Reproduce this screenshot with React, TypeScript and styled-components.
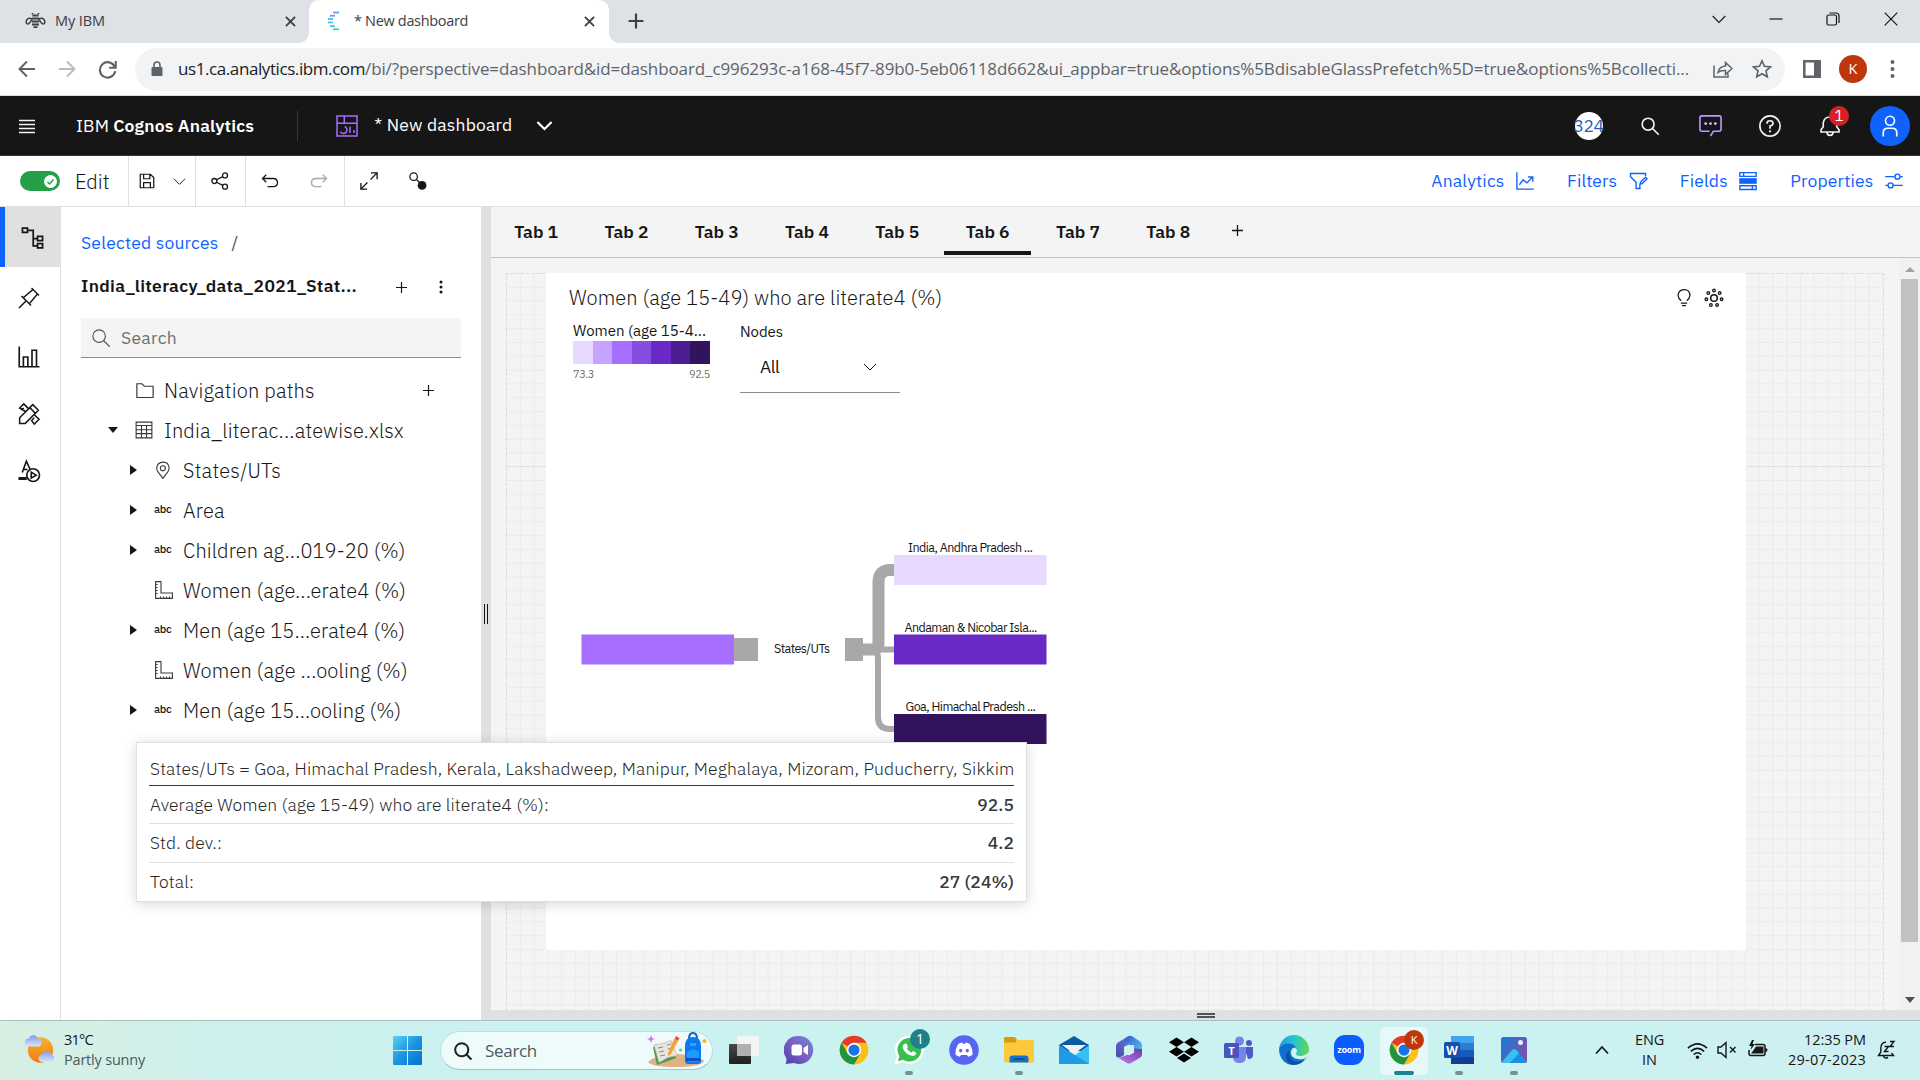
import React from "react";
import styled, { createGlobalStyle } from "styled-components";

const plex = `"IBM Plex Sans", Roboto, "Liberation Sans", sans-serif`;
const segoe = `"Segoe UI", "Open Sans", "Noto Sans", sans-serif`;

const GlobalStyle = createGlobalStyle`
  * { box-sizing: border-box; }
  html, body { margin: 0; padding: 0; }
  body { width: 1920px; height: 1080px; overflow: hidden; background: #fff; font-family: ${plex}; color: #161616; }
  svg { display: block; flex: none; }
`;

/* ---------- shared parts ---------- */

const Page = styled.div`
  position: relative;
  width: 1920px;
  height: 1080px;
  display: flex;
  flex-direction: column;
  overflow: hidden;
`;

const Text = styled.span<{ $size?: number; $weight?: number; $color?: string; $ls?: number; $w?: number }>`
  flex: none;
  width: ${(p) => (p.$w ? `${p.$w}px` : "auto")};
  font-family: ${plex};
  font-size: ${(p) => p.$size ?? 17.5}px;
  font-weight: ${(p) => p.$weight ?? 400};
  color: ${(p) => p.$color ?? "#161616"};
  letter-spacing: ${(p) => p.$ls ?? 0.16}px;
  line-height: 1.25;
  white-space: pre;
`;

const SysText = styled(Text)`
  font-family: ${segoe};
`;

type IconProps = { d?: string; size?: number; w?: number; color?: string; box?: number; children?: React.ReactNode };

function Icon({ d, size = 20, w = 2, color = "#161616", box = 32, children }: IconProps) {
  return (
    <svg width={size} height={size} viewBox={`0 0 ${box} ${box}`} fill="none" stroke={color} strokeWidth={w}>
      {d && <path d={d} />}
      {children}
    </svg>
  );
}

const Slot = styled.span<{ $w: number; $h?: number; $bg?: string }>`
  flex: none;
  width: ${(p) => p.$w}px;
  height: ${(p) => (p.$h ? `${p.$h}px` : "100%")};
  background: ${(p) => p.$bg ?? "transparent"};
  display: flex;
  align-items: center;
  justify-content: center;
  position: relative;
`;

/* ---------- browser ---------- */

const TabStrip = styled.div`
  height: 43px;
  flex: none;
  display: flex;
  background: #dee1e6;
`;

const BrowserTab = styled.div<{ $active?: boolean; $w: number; $pad: number }>`
  width: ${(p) => p.$w}px;
  height: 43px;
  padding: 0 10px 1px ${(p) => p.$pad}px;
  display: flex;
  align-items: center;
  background: ${(p) => (p.$active ? "#fff" : "transparent")};
  border-radius: 10px 10px 0 0;
  position: relative;
  ${(p) =>
    p.$active &&
    `&::before, &::after {
      content: ""; position: absolute; bottom: 0; width: 10px; height: 10px;
    }
    &::before { left: -10px; background: radial-gradient(circle at 0 0, transparent 9.5px, #fff 10px); }
    &::after { right: -10px; background: radial-gradient(circle at 100% 0, transparent 9.5px, #fff 10px); }`}
`;

const Grow = styled.span`
  flex: 1;
`;

const WindowControls = styled.div`
  margin-left: auto;
  display: flex;
  height: 37px;
`;

const AddressRow = styled.div`
  height: 53px;
  flex: none;
  display: flex;
  align-items: center;
  border-bottom: 1px solid #dadce0;
  background: #fff;
`;

const NavButtons = styled.div`
  width: 135px;
  padding-left: 6px;
  display: flex;
`;

const Omnibox = styled.div`
  width: 1650px;
  height: 43px;
  border-radius: 22px;
  background: #f1f3f4;
  display: flex;
  align-items: center;
  padding-left: 15px;
`;

const Avatar = styled.span<{ $d: number }>`
  width: ${(p) => p.$d}px;
  height: ${(p) => p.$d}px;
  border-radius: 50%;
  background: #bf360c;
  display: flex;
  align-items: center;
  justify-content: center;
`;

/* ---------- product header ---------- */

const Header = styled.header`
  height: 60px;
  flex: none;
  background: #161616;
  border-bottom: 1px solid #393939;
  display: flex;
  align-items: center;
`;

const HeaderDivider = styled.span`
  width: 1px;
  height: 30px;
  background: #393939;
  margin: 0 38px 0 42px;
`;

const DocName = styled.div`
  display: flex;
  align-items: center;
  padding: 0 0 2px 16px;
`;

const HeaderActions = styled.div`
  margin-left: auto;
  display: flex;
  align-items: center;
  height: 100%;
`;

const CountCircle = styled.span`
  width: 28px;
  height: 28px;
  border-radius: 50%;
  background: #fff;
  display: flex;
  align-items: center;
  justify-content: center;
`;

const NotificationBadge = styled.span`
  position: absolute;
  left: 29px;
  top: 10px;
  width: 20px;
  height: 20px;
  border-radius: 50%;
  background: #da1e28;
  display: flex;
  align-items: center;
  justify-content: center;
`;

const UserCircle = styled.span`
  width: 40px;
  height: 40px;
  border-radius: 50%;
  background: #0f62fe;
  display: flex;
  align-items: center;
  justify-content: center;
`;

/* ---------- toolbar ---------- */

const Toolbar = styled.div`
  height: 51px;
  flex: none;
  display: flex;
  background: #fff;
  border-bottom: 1px solid #e0e0e0;
`;

const ToolGroup = styled.div<{ $w: number }>`
  width: ${(p) => p.$w}px;
  display: flex;
  align-items: center;
  border-right: 1px solid #e0e0e0;
`;

const Toggle = styled.span`
  width: 40px;
  height: 20px;
  border-radius: 10px;
  background: #24a148;
  display: flex;
  align-items: center;
  justify-content: flex-end;
  padding-right: 3px;
  margin: 0 15px 0 20px;
`;

const ToolLinks = styled.div`
  margin-left: auto;
  padding-right: 16px;
  display: flex;
  align-items: center;
  gap: 32px;
`;

const ToolLink = styled.div`
  display: flex;
  align-items: center;
  gap: 10.5px;
`;

/* ---------- workspace ---------- */

const Workspace = styled.main`
  height: 813px;
  flex: none;
  display: flex;
`;

const Rail = styled.nav`
  width: 61px;
  flex: none;
  border-right: 1px solid #e0e0e0;
  display: flex;
  flex-direction: column;
`;

const RailItem = styled.div<{ $active?: boolean; $h?: number }>`
  height: ${(p) => p.$h ?? 57}px;
  display: flex;
  align-items: center;
  justify-content: center;
  padding-right: ${(p) => (p.$active ? 0 : 2)}px;
  background: ${(p) => (p.$active ? "#e0e0e0" : "transparent")};
  border-left: ${(p) => (p.$active ? "5px solid #0f62fe" : "0")};
`;

const SourcePanel = styled.aside`
  width: 420px;
  flex: none;
  padding: 22px 20px 0;
`;

const Crumbs = styled.div`
  display: flex;
  height: 28px;
  align-items: center;
  gap: 13px;
`;

const SourceTitle = styled.div`
  display: flex;
  align-items: center;
  height: 24px;
  margin-top: 18px;
`;

const TitleText = styled(Text)`
  padding-bottom: 3px;
`;

const SearchField = styled.div`
  height: 40px;
  margin-top: 19px;
  background: #f4f4f4;
  border-bottom: 1px solid #8d8d8d;
  display: flex;
  align-items: center;
  padding-left: 10px;
  gap: 10px;
`;

const Tree = styled.div`
  margin-top: 12px;
  display: flex;
  flex-direction: column;
`;

const TreeRow = styled.div<{ $deep?: boolean }>`
  height: 40px;
  display: grid;
  grid-template-columns: ${(p) => (p.$deep ? "44px 28px 1fr" : "27px 29px 1fr 38px")};
  margin-left: ${(p) => (p.$deep ? 30 : 27)}px;
  align-items: center;
`;

const Abc = styled(Text)`
  width: 19px;
  font-size: 11px;
  font-weight: 500;
  letter-spacing: -0.3px;
  margin-left: -1px;
`;

const CaretRight = styled.span`
  width: 0;
  height: 0;
  margin: 0 0 1px 19px;
  border-left: 7px solid #161616;
  border-top: 5px solid transparent;
  border-bottom: 5px solid transparent;
`;

const CaretDown = styled.span<{ $c?: string }>`
  width: 0;
  height: 0;
  border-top: 6px solid ${(p) => p.$c ?? "#161616"};
  border-left: 5px solid transparent;
  border-right: 5px solid transparent;
`;

const CaretUp = styled(CaretDown)`
  border-top: 0;
  border-bottom: 5px solid #a3a3a3;
`;

const Splitter = styled.div`
  width: 10px;
  flex: none;
  background: #e0e0e0;
  display: flex;
  align-items: center;
  justify-content: center;
`;

const SplitGrip = styled.span<{ $flat?: boolean }>`
  width: ${(p) => (p.$flat ? 18 : 4)}px;
  height: ${(p) => (p.$flat ? 5 : 20)}px;
  ${(p) => (p.$flat ? "border-top: 2px solid #525252; border-bottom: 2px solid #525252;" : "border-left: 1px solid #161616; border-right: 1px solid #161616;")}
`;

const Board = styled.section`
  flex: 1;
  display: flex;
  flex-direction: column;
  background: #f4f4f4;
`;

const PageTabs = styled.div`
  height: 51px;
  flex: none;
  display: flex;
  border-bottom: 1px solid #c6c6c6;
`;

const PageTab = styled.div<{ $active?: boolean }>`
  width: 90.3px;
  height: 48px;
  display: flex;
  align-items: center;
  justify-content: center;
  padding-top: 2px;
  position: relative;
  &::after {
    content: "";
    position: absolute;
    left: 2px;
    right: 2px;
    bottom: 0;
    height: 4px;
    background: ${(p) => (p.$active ? "#161616" : "transparent")};
  }
`;

const CanvasRow = styled.div`
  height: 752px;
  flex: none;
  display: flex;
`;

const Canvas = styled.div`
  flex: 1;
  padding: 15px 15px 0;
`;

const Grid = styled.div`
  height: 737px;
  padding-left: 39px;
  border: 1px dashed #dcdcdc;
  border-bottom: 0;
  background-image:
    repeating-linear-gradient(90deg, #dcdcdc 0 4px, transparent 4px 6px),
    linear-gradient(90deg, #ebebeb 1px, transparent 1px),
    linear-gradient(#ebebeb 1px, transparent 1px);
  background-size: 100% 1px, 13.78px 100%, 100% 13.8px;
  background-position: 0 192px, -1px -1px, -1px -1px;
  background-repeat: no-repeat, repeat, repeat;
`;

const Widget = styled.article`
  width: 1200px;
  height: 677px;
  margin-top: -1px;
  background: #fff;
  position: relative;
  padding: 11px 22px 0;
`;

const WidgetHead = styled.div`
  display: flex;
  height: 28px;
  align-items: center;
  gap: 10px;
`;

const WidgetTitle = styled(Text)`
  padding: 0 0 1px 1px;
`;

const Controls = styled.div`
  display: flex;
  padding: 10px 0 0 5px;
  gap: 30px;
`;

const Legend = styled.div`
  width: 137px;
  display: flex;
  flex-direction: column;
`;

const Ramp = styled.div`
  display: flex;
  height: 23px;
`;

const Swatch = styled.span<{ $c: string }>`
  flex: 1;
  background: ${(p) => p.$c};
`;

const RampEnds = styled.div`
  display: flex;
  justify-content: space-between;
  margin-top: 4px;
`;

const NodePicker = styled.div`
  width: 160px;
  display: flex;
  flex-direction: column;
  padding-top: 1px;
`;

const Select = styled.div`
  height: 50px;
  margin-top: 1px;
  padding: 0 22px 0 20px;
  border-bottom: 1px solid #8d8d8d;
  display: flex;
  align-items: center;
  justify-content: space-between;
`;

const TreeChart = styled.svg`
  position: absolute;
  left: 0;
  top: 240px;
`;

const Scrollbar = styled.div`
  width: 21px;
  flex: none;
  background: #f1f1f1;
  display: flex;
  flex-direction: column;
  align-items: center;
  padding: 9px 0 7px;
`;

const Thumb = styled.span`
  width: 17px;
  height: 663px;
  margin: 7px 0 auto;
  background: #c1c1c1;
`;

const BottomBar = styled.div`
  height: 10px;
  flex: none;
  background: #e0e0e0;
  display: flex;
  align-items: center;
  justify-content: center;
`;

/* ---------- tooltip ---------- */

const Tooltip = styled.div`
  position: absolute;
  left: 136px;
  top: 742px;
  width: 891px;
  height: 160px;
  padding: 11px 12px 0;
  background: #fff;
  border: 1px solid #e0e0e0;
  box-shadow: 0 2px 12px rgba(0, 0, 0, 0.16);
`;

const TipRow = styled.div<{ $h: number; $line: string; $pb?: number }>`
  height: ${(p) => p.$h}px;
  display: flex;
  align-items: center;
  justify-content: space-between;
  padding: 0 0 ${(p) => p.$pb ?? 0}px 1px;
  border-bottom: 1px solid ${(p) => p.$line};
`;

/* ---------- taskbar ---------- */

const Taskbar = styled.footer`
  height: 60px;
  flex: none;
  display: flex;
  align-items: center;
  border-top: 1px solid #a9bfbe;
  background: linear-gradient(90deg, #d8efe2 0, #cdf1ef 260px, #c9f2f1 560px, #caf2f0 1500px, #cfeff2 1920px);
`;

const Weather = styled.div`
  width: 393px;
  padding: 0 0 1px 23px;
  display: flex;
  align-items: center;
  gap: 7px;
`;

const Stack = styled.div<{ $align?: string; $w?: number }>`
  display: flex;
  flex-direction: column;
  align-items: ${(p) => p.$align ?? "flex-start"};
  gap: 1.5px;
  width: ${(p) => (p.$w ? `${p.$w}px` : "auto")};
`;

const SearchPill = styled.div`
  width: 273px;
  height: 39px;
  margin: 0 3px 0 18px;
  border-radius: 20px;
  background: #eefbfb;
  border: 1px solid #c0dedd;
  border-bottom-color: #9fc4c3;
  display: flex;
  align-items: center;
  padding: 0 4px 0 12px;
`;

const AppSlot = styled.div<{ $active?: boolean; $run?: boolean }>`
  width: 55px;
  height: 60px;
  flex: none;
  display: flex;
  align-items: center;
  justify-content: center;
  padding-bottom: 1px;
  position: relative;
  &::before {
    content: "";
    position: absolute;
    inset: 6px 3.5px;
    border-radius: 5px;
    background: ${(p) => (p.$active ? "#e6f8f8" : "transparent")};
  }
  &::after {
    content: "";
    position: absolute;
    bottom: 6px;
    left: 50%;
    width: ${(p) => (p.$active ? 20 : p.$run ? 8 : 0)}px;
    height: 4px;
    transform: translateX(-50%);
    border-radius: 2px;
    background: ${(p) => (p.$active ? "#1f828c" : "#7a8f8e")};
  }
  svg { position: relative; }
`;

const AppBadge = styled.span<{ $c: string; $x: number; $y: number }>`
  position: absolute;
  left: ${(p) => p.$x}px;
  top: ${(p) => p.$y}px;
  width: 20px;
  height: 20px;
  border-radius: 50%;
  background: ${(p) => p.$c};
  display: flex;
  align-items: center;
  justify-content: center;
`;

const Tray = styled.div`
  margin-left: auto;
  display: flex;
  align-items: center;
  height: 100%;
  padding-bottom: 1px;
`;

/* ---------- data ---------- */

const treeItems: { label: string; kind: "abc" | "pin" | "measure"; ls: number }[] = [
  { label: "States/UTs", kind: "pin", ls: 0.22 },
  { label: "Area", kind: "abc", ls: 0.2 },
  { label: "Children ag...019-20 (%)", kind: "abc", ls: 0.09 },
  { label: "Women (age...erate4 (%)", kind: "measure", ls: 0.11 },
  { label: "Men (age 15...erate4 (%)", kind: "abc", ls: 0.11 },
  { label: "Women (age ...ooling (%)", kind: "measure", ls: 0.13 },
  { label: "Men (age 15...ooling (%)", kind: "abc", ls: 0.11 },
];

const ramp = ["#e8daff", "#c6a3ff", "#a56eff", "#874de0", "#6929c4", "#4c1d90", "#31135e"];

const tipRows = [
  { h: 38, label: "Average Women (age 15-49) who are literate4 (%):", value: "92.5", ls: 0.083 },
  { h: 39, label: "Std. dev.:", value: "4.2", ls: 0.1 },
  { h: 39, label: "Total:", value: "27 (24%)", ls: 0.15 },
];

/* ---------- drawings ---------- */

const Chevron = ({ size = 16, color = "#161616", w = 2 }: { size?: number; color?: string; w?: number }) => (
  <Icon size={size} color={color} w={w} d="M4 10l12 12 12-12" />
);

const Close = ({ size = 11, color = "#3c4043", w = 2 }: { size?: number; color?: string; w?: number }) => (
  <Icon size={size} color={color} w={w} box={12} d="M1 1l10 10M11 1L1 11" />
);

const Plus = () => <Icon size={11} box={11} w={1.2} d="M5.500 0v11M0 5.500h11" />;

const ChromeLogo = ({ size = 30 }: { size?: number }) => (
  <svg width={size} height={size} viewBox="0 0 48 48">
    <circle cx="24" cy="24" r="23" fill="#fbc116" />
    <path d="M24 24L4.1 12.5A23 23 0 0 1 43.9 12.5H24z" fill="#e33b2e" />
    <path d="M4.1 12.5A23 23 0 0 0 24 47l10-17.2L24 24 14 29.8z" fill="#229342" />
    <circle cx="24" cy="24" r="11.5" fill="#fff" />
    <circle cx="24" cy="24" r="9" fill="#1a73e8" />
  </svg>
);

const DashboardIcon = () => (
  <svg width="22" height="22" viewBox="0 0 22 22" fill="none" stroke="#a56eff" strokeWidth="1.5">
    <path d="M1 1h20v20H1zM1 8.3h20M8.3 1v7.3M8.7 11.5a3.6 3.6 0 1 1-4.4 5.2M14 11.5V18M18 15v3" />
  </svg>
);

const Bee = () => (
  <svg width="21" height="16" viewBox="0 0 21 16" fill="none" stroke="#3c4043" strokeWidth="1.5">
    <path d="M7.5 2.5h6M7 5.5h7M7 8.5h7M7 11.5h7M8.5 14.2h4M8 1L7 0M13 1l1-1" strokeWidth="1.8" />
    <path d="M7 6C3 4 .8 7 1.2 9.5 2 12.500 5.500 10.500 7 6zM14 6c4-2 6.200 1 5.800 3.500C19 12.500 15.500 10.500 14 6z" />
  </svg>
);

const CognosMark = () => (
  <svg width="14" height="20" viewBox="0 0 14 20" strokeWidth="1.7" fill="none">
    <path d="M6 1.500h6" stroke="#5c9cf5" />
    <path d="M3 4.800h5" stroke="#55a4f3" />
    <path d="M1 8h5" stroke="#4eb0ee" />
    <path d="M1 11.500h5" stroke="#45bde6" />
    <path d="M3 15h5" stroke="#3dc6de" />
    <path d="M6 18.300h6" stroke="#34cfd8" />
  </svg>
);

const RulerIcon = () => (
  <svg width="18" height="18" viewBox="0 0 18 18" fill="none" stroke="#393939" strokeWidth="1.1">
    <path d="M.6.600h5.400v11.400h11.400v5.400H.600zM.600 3.500h2M.600 6.500h2M.600 9.500h2M.600 12.500h2M5.500 17.400v-2M8.500 17.400v-2M11.500 17.400v-2M14.500 17.400v-2" />
  </svg>
);

const PushPin = () => (
  <svg width="24" height="24" viewBox="0 0 32 32" fill="#161616">
    <path d="M28.590 13.310L30 11.900 20 2l-1.310 1.420 1.180 1.180-11.490 9.720-1.720-1.710L5.250 14l5.660 5.680L2 28.580 3.410 30l8.910-8.910L18 26.750l1.390-1.420-1.710-1.710 9.720-11.490zM16.260 22.200L9.800 15.740 21.290 6 26 10.710z" />
  </svg>
);

const InsightWheel = () => (
  <svg width="20" height="20" viewBox="0 0 20 20" fill="none" stroke="#161616" strokeWidth="1.300">
    <circle cx="10" cy="10" r="3.300" strokeWidth="1.500" />
    <circle cx="10" cy="2.500" r="1.300" />
    <circle cx="4.300" cy="5" r="1.300" />
    <circle cx="15.700" cy="5" r="1.300" />
    <circle cx="2.400" cy="11.300" r="1.300" />
    <circle cx="17.600" cy="11.300" r="1.300" />
    <circle cx="6.900" cy="17" r="1.300" />
    <circle cx="13.100" cy="17" r="1.300" />
  </svg>
);

function Chart() {
  return (
    <TreeChart width="560" height="240" viewBox="546 513 560 240">
      <g fill="none" stroke="#a8a8a8">
        <path d="M862 649.500h11q5.500 0 5.500-6V582q0-12 12-12h4" strokeWidth="12" />
        <path d="M872 649.500h23" strokeWidth="6" />
        <path d="M872 650q6 0 6 9v58q0 12 12 12h5" strokeWidth="6" />
      </g>
      <g fill="#a8a8a8">
        <rect x="734" y="638" width="24" height="23" />
        <rect x="845" y="638" width="18" height="23" />
      </g>
      <rect x="581.500" y="634.500" width="152.500" height="30" fill="#a56eff" />
      <rect x="894" y="555" width="152.500" height="30" fill="#e8daff" />
      <rect x="894" y="634.500" width="152.500" height="30" fill="#6929c4" />
      <rect x="894" y="714" width="152.500" height="30" fill="#31135e" />
      <g fontFamily="IBM Plex Sans, Roboto, sans-serif" fontSize="12.500" fill="#161616" letterSpacing="-0.560">
        <text x="774" y="653">States/UTs</text>
        <text x="908" y="552">India, Andhra Pradesh ...</text>
        <text x="904.500" y="632">Andaman &amp; Nicobar Isla...</text>
        <text x="905.500" y="711">Goa, Himachal Pradesh ...</text>
      </g>
    </TreeChart>
  );
}

const WeatherIcon = () => (
  <svg width="34" height="34" viewBox="0 0 34 34">
    <defs>
      <linearGradient id="sun" x1="0" y1="0" x2="0" y2="1"><stop offset="0" stopColor="#f5b52e" /><stop offset="1" stopColor="#f07a16" /></linearGradient>
      <linearGradient id="cloud" x1="0" y1="0" x2="0" y2="1"><stop offset="0" stopColor="#7f9bea" /><stop offset="1" stopColor="#dbe5fb" /></linearGradient>
    </defs>
    <circle cx="17.500" cy="17" r="12.700" fill="url(#sun)" />
    <path d="M6 13.500a4 4 0 0 1-.3-8 5 5 0 0 1 9.500.5 3.800 3.800 0 0 1 .3 7.500z" fill="url(#cloud)" />
    <path d="M19 29a3.900 3.900 0 0 1-.3-7.700 5 5 0 0 1 9.600.5 3.700 3.700 0 0 1 .3 7.200z" fill="url(#cloud)" />
  </svg>
);

const WindowsLogo = () => (
  <svg width="29" height="29" viewBox="0 0 29 29">
    <defs><linearGradient id="win" gradientUnits="userSpaceOnUse" x1="0" y1="0" x2="29" y2="29"><stop offset="0" stopColor="#5bd1fb" /><stop offset=".5" stopColor="#1a95e0" /><stop offset="1" stopColor="#0571cf" /></linearGradient></defs>
    <path d="M0 1q0-1 1-1h13v14H0zM15 0h13q1 0 1 1v13H15zM0 15h14v14H1q-1 0-1-1zM15 15h14v13q0 1-1 1H15z" fill="url(#win)" />
  </svg>
);

const SchoolArt = () => (
  <svg width="62" height="37" viewBox="0 0 62 37">
    <path d="M2 30q10-9 30-8 22 2 26 7-4 6-28 6T2 30z" fill="#dfb184" />
    <path d="M7 15l18-4 5 15-19 7z" fill="#4a9a4d" />
    <path d="M8 13l9-1.500 8-3 6 15-9 2-9 5z" fill="#e9e6df" stroke="#b9b2a8" strokeWidth=".7" />
    <path d="M12 16l5-1M13 20l5-1M14 24l5-1M21 13l4-1M22 17l4-1" stroke="#8a8a8a" strokeWidth="1" />
    <path d="M22 21l6-14 4 2-7 13-3 2z" fill="#f6a33a" />
    <path d="M28.500 7l1.500-3 3.500 2-1.500 3z" fill="#ef4b3f" />
    <path d="M5 3l1.200 3L9 7 6.200 8 5 11 3.800 8 1 7l2.800-1z" fill="#c77bf2" />
    <path d="M43 7q0-6 4-6t4 6" fill="none" stroke="#0b5ccf" strokeWidth="2" />
    <path d="M39 14q0-9 8-9t8 9v15q0 3-3 3H42q-3 0-3-3z" fill="#0c78f2" />
    <path d="M41 20q6-5 12 0v8q0 2-2 2h-8q-2 0-2-2z" fill="#1e9bff" />
    <path d="M40 26h14v3H40z" fill="#0a4fc4" />
    <path d="M44 11h6v3h-6z" fill="#27a7ff" />
    <circle cx="34.500" cy="18" r="1.500" fill="#3cc8c8" />
    <circle cx="58.500" cy="9" r="2" fill="#f7b32b" />
  </svg>
);

function TaskApps() {
  return (
    <>
      <AppSlot>
        <svg width="30" height="30" viewBox="0 0 30 30">
          <defs><linearGradient id="tv" x1="0" y1="0" x2="0" y2="1"><stop offset="0" stopColor="#4a4a4a" /><stop offset="1" stopColor="#1e1e1e" /></linearGradient></defs>
          <rect y="9" width="22" height="20" rx="1" fill="url(#tv)" /><rect x="8" y="1" width="22" height="20" rx="1" fill="#f4f4f4" /><path d="M8 9h14v12H8z" fill="#b0b0b0" />
        </svg>
      </AppSlot>
      <AppSlot>
        <svg width="30" height="30" viewBox="0 0 30 30">
          <defs><linearGradient id="chat" x1="1" y1="0" x2="0" y2="1"><stop offset="0" stopColor="#6f8ad6" /><stop offset=".5" stopColor="#7a5fc4" /><stop offset="1" stopColor="#4b3fae" /></linearGradient></defs>
          <path d="M15 1a14 14 0 1 1-5 27L1.500 29q1.500-3 .8-6A14 14 0 0 1 15 1z" fill="url(#chat)" />
          <rect x="7.500" y="9.500" width="10.500" height="11" rx="2.500" fill="#fff" /><path d="M19.500 13l4.500-3v10l-4.500-3z" fill="#fff" />
        </svg>
      </AppSlot>
      <AppSlot><ChromeLogo /></AppSlot>
      <AppSlot $run>
        <svg width="30" height="30" viewBox="0 0 30 30">
          <path d="M15.500.5a14.300 14.300 0 1 1-7 26.800L.5 29.500l2.200-7.800A14.300 14.300 0 0 1 15.500.5z" fill="#fff" />
          <path d="M15.500 3a11.800 11.800 0 1 1-6.300 21.800L4 26.200l1.400-5A11.800 11.800 0 0 1 15.500 3z" fill="#35c04f" />
          <path d="M11.200 8.500c.8-.3 1.400 0 1.700.8l.9 2.100c.2.500-.1 1-.9 1.900.9 1.900 2.400 3.300 4.500 4.200.9-1.200 1.300-1.500 1.900-1.300l2.300 1.100c.6.300.6.700.4 1.400-.5 1.700-2.400 2.400-4 2.100-4.800-1-8.400-4.300-9.300-8.300-.3-1.800.9-3.600 2.500-4z" fill="#fff" />
        </svg>
        <AppBadge $c="#1f7f8a" $x={29} $y={8}><SysText $size={14} $color="#fff" $ls={0}>1</SysText></AppBadge>
      </AppSlot>
      <AppSlot>
        <svg width="30" height="30" viewBox="0 0 30 30"><circle cx="15" cy="15" r="14.800" fill="#5865f2" /><path d="M9.500 8.700q2-1 3.700-1.200l.6 1.200h2.400l.6-1.200q1.700.2 3.700 1.200 3.500 5 3 11-2 1.600-4.300 2.100l-1.100-1.800H12l-1.200 1.800Q8.500 21.300 6.500 19.700q-.5-6 3-11z" fill="#fff" /><ellipse cx="11.700" cy="15.600" rx="1.600" ry="1.900" fill="#5865f2" /><ellipse cx="18.300" cy="15.600" rx="1.600" ry="1.900" fill="#5865f2" /></svg>
      </AppSlot>
      <AppSlot $run>
        <svg width="30" height="30" viewBox="0 0 30 30"><path d="M0 3.500q0-1.500 1.500-1.500H11l2 3v6H0z" fill="#d99a06" /><path d="M0 7.500h11l2-2.500h15.500q1.500 0 1.500 1.500V26q0 1.500-1.500 1.500h-27Q0 27.500 0 26z" fill="#fcc93d" /><path d="M5.500 27.500v-4q0-3 3-3h13q3 0 3 3v4z" fill="#1273cc" /><path d="M9.500 24h11" stroke="#0a3f7a" strokeWidth="1.300" /></svg>
      </AppSlot>
      <AppSlot>
        <svg width="30" height="30" viewBox="0 0 30 30"><path d="M0 10L15 1l15 9v6H0z" fill="#0c59a4" /><path d="M0 10l15 11 15-11v19H0z" fill="#36c0f3" /><path d="M0 10l30 19H0z" fill="#1e9be3" /><path d="M3 10h24L15 19z" fill="#f2f2f2" /></svg>
      </AppSlot>
      <AppSlot>
        <svg width="30" height="30" viewBox="0 0 30 30">
          <defs>
            <linearGradient id="m1" x1="1" y1="0" x2="0" y2="1"><stop offset="0" stopColor="#6f77e8" /><stop offset="1" stopColor="#4d49a6" /></linearGradient>
            <linearGradient id="m2" x1="0" y1="0" x2="1" y2="1"><stop offset="0" stopColor="#3b52c4" /><stop offset="1" stopColor="#52d0fb" /></linearGradient>
            <linearGradient id="m3" x1="0" y1="1" x2="1" y2="0"><stop offset="0" stopColor="#c07be6" /><stop offset="1" stopColor="#6d3fa8" /></linearGradient>
          </defs>
          <path d="M13 2L4 7.500Q2 8.800 2 11v9q0 2.500 2.500 2.500 1.500 0 3-1l2.500-1.500V12l8-5V2.500Q16-.3 13 2z" fill="url(#m1)" />
          <path d="M13 2q3-2 5.500-.5L26 6.500q2 1.500 2 4v8L20 14v-4l-10 1V7q0-3.500 3-5z" fill="url(#m2)" />
          <path d="M28 14v5.500q0 2-2 3.300L17 28q-2 1-4 0l-8.500-5q1.500 0 3-1L20 17.500v-4z" fill="url(#m3)" />
          <path d="M15 9.500l5 2.500v5.500l-5 3-5-3V12z" fill="#d0f2f2" />
        </svg>
      </AppSlot>
      <AppSlot>
        <svg width="30" height="30" viewBox="0 0 30 30" fill="#000"><path d="M7.500 2.500l7.500 4.700-7.500 4.700L0 7.200zM22.500 2.500L30 7.200l-7.500 4.700L15 7.200zM7.500 12.100l7.500 4.700-7.500 4.700L0 16.800zM22.500 12.100l7.500 4.700-7.500 4.700-7.500-4.700zM15 18.500l7 4.400-7 4.600-7-4.600z" /></svg>
      </AppSlot>
      <AppSlot>
        <svg width="30" height="30" viewBox="0 0 30 30"><circle cx="25" cy="8" r="3" fill="#5059c9" /><path d="M20 12h9v8q0 4-5 4z" fill="#5059c9" /><circle cx="15.500" cy="6" r="4.500" fill="#7b83eb" /><path d="M9 12h13v10q0 6-6.500 6T9 22z" fill="#7b83eb" /><rect y="8" width="15" height="15" rx="1.500" fill="#4b53bc" /><text x="7.500" y="19.500" textAnchor="middle" fontSize="11" fontWeight="700" fill="#fff" fontFamily="Open Sans, sans-serif">T</text></svg>
      </AppSlot>
      <AppSlot>
        <svg width="30" height="30" viewBox="0 0 30 30">
          <defs><linearGradient id="edge" x1="0" y1=".3" x2="1" y2=".4"><stop offset="0" stopColor="#1f9fe0" /><stop offset=".5" stopColor="#2bc3d2" /><stop offset="1" stopColor="#62d84e" /></linearGradient></defs>
          <circle cx="15" cy="15" r="15" fill="url(#edge)" />
          <path d="M.3 13Q4 8 10 8.500q6 .5 7 5-5-1-5.500 3.500 0 6 7 7 4 .5 8-1.500-4 7.500-11.500 7.500Q1 30 .3 13z" fill="#1170cf" />
          <path d="M11.500 15q-3 6 1.500 10t12-.500q-5 6-12 5-7-2.500-6-9 1-4 4.500-5.500z" fill="#0d4f9c" />
          <path d="M15.500 12.500q4 2.500 1.500 6-.5 2 4 2.500 5 .3 9-4.500l-1.500 5.500q-4 3-8.500 2.300-8-1-8-7 .5-4 3.500-4.800z" fill="#d0f2f2" />
        </svg>
      </AppSlot>
      <AppSlot>
        <svg width="30" height="30" viewBox="0 0 30 30"><rect width="30" height="30" rx="11" fill="#0b5cff" /><text x="15" y="17.500" textAnchor="middle" fontSize="9" fontWeight="700" fill="#fff" letterSpacing="-.2" fontFamily="Open Sans, sans-serif">zoom</text></svg>
      </AppSlot>
      <AppSlot $active $run>
        <ChromeLogo />
        <AppBadge $c="#bf360c" $x={28} $y={9}><SysText $size={11} $color="#fff" $ls={0}>K</SysText></AppBadge>
      </AppSlot>
      <AppSlot $run>
        <svg width="30" height="30" viewBox="0 0 30 30"><path d="M7 1h23v7H7z" fill="#41a5ee" /><path d="M7 8h23v7H7z" fill="#2b7cd3" /><path d="M7 15h23v7H7z" fill="#185abd" /><path d="M7 22h23v7H7z" fill="#103f91" /><rect y="7" width="16" height="16" rx="1.500" fill="#174fb0" /><text x="8" y="19.500" textAnchor="middle" fontSize="12" fontWeight="700" fill="#fff" fontFamily="Open Sans, sans-serif">W</text></svg>
      </AppSlot>
      <AppSlot $run>
        <svg width="28" height="28" viewBox="0 0 28 28">
          <defs><linearGradient id="photo" x1="0" y1="0" x2="1" y2=".6"><stop offset="0" stopColor="#0f7fd8" /><stop offset="1" stopColor="#7d4fae" /></linearGradient></defs>
          <rect x="1" y="1" width="26" height="26" rx="2.500" fill="url(#photo)" /><path d="M12 14q2-2 4 0l11 11.500q-1 1.500-3 1.500H12z" fill="#1c8fe0" /><path d="M2 26l10-12q2-2 4 0l3 3-9 10H3.500z" fill="#35c1f1" /><circle cx="20.500" cy="6.500" r="2.500" fill="#eef" />
        </svg>
      </AppSlot>
    </>
  );
}

/* ---------- page ---------- */

export default function App() {
  return (
    <Page>
      <GlobalStyle />

      <TabStrip>
        <BrowserTab $w={309} $pad={25}>
          <Bee />
          <Slot $w={9} />
          <SysText $size={14.5} $color="#3c4043" $ls={-0.09}>My IBM</SysText>
          <Grow />
          <Close />
          <Slot $w={3} />
        </BrowserTab>
        <BrowserTab $active $w={300} $pad={18}>
          <CognosMark />
          <Slot $w={13} />
          <SysText $size={14.5} $color="#3c4043" $ls={-0.33}>* New dashboard</SysText>
          <Grow />
          <Close />
          <Slot $w={4} />
        </BrowserTab>
        <Slot $w={54} $h={42}><Icon size={16} w={1.9} box={14} color="#3c4043" d="M7 .5v13M.5 7h13" /></Slot>
        <WindowControls>
          <Slot $w={57}><Icon size={14} box={14} w={1.1} d="M.7 4l6.300 6.500L13.300 4" /></Slot>
          <Slot $w={57}><Icon size={14} box={14} w={1.200} d="M.5 7h13" /></Slot>
          <Slot $w={57}><Icon size={14} box={14} w={1.200} d="M2.500 3h6.500q1.500 0 1.500 1.500v7q0 1.500-1.500 1.500H2.500Q1 13 1 11.500v-7Q1 3 2.500 3zM3.500 1H10q3 0 3 3v7" /></Slot>
          <Slot $w={59}><Icon size={14} box={14} w={1.200} d="M.7.700l12.600 12.600M13.300.700L.700 13.300" /></Slot>
        </WindowControls>
      </TabStrip>

      <AddressRow>
        <NavButtons>
          <Slot $w={41}><Icon size={18} box={18} color="#5f6368" d="M17 9H2M9 1.500L1.500 9 9 16.500" /></Slot>
          <Slot $w={40}><Icon size={18} box={18} color="#babcbe" d="M1 9h15M9 1.500L16.500 9 9 16.500" /></Slot>
          <Slot $w={41}><Icon size={19} box={18} color="#5f6368" d="M15.800 6.500A7.300 7.300 0 1 0 16.300 10.500M16.800 1v6.300h-6.300" /></Slot>
        </NavButtons>
        <Omnibox>
          <svg width="14" height="16" viewBox="0 0 14 16"><path d="M2.500 6h9q1 0 1 1v7q0 1-1 1h-9q-1 0-1-1V7q0-1 1-1z" fill="#5f6368" /><path d="M4 6.500V4a3 3 0 0 1 6 0v2.500" fill="none" stroke="#5f6368" strokeWidth="1.600" /></svg>
          <Slot $w={14} />
          <SysText $size={17} $color="#202124" $ls={-0.415} $w={187}>us1.ca.analytics.ibm.com</SysText>
          <SysText $size={17} $color="#5f6368" $ls={-0.102} $w={1339}>/bi/?perspective=dashboard&id=dashboard_c996293c-a168-45f7-89b0-5eb06118d662&ui_appbar=true&options%5BdisableGlassPrefetch%5D=true&options%5Bcollecti...</SysText>
          <Slot $w={38}><Icon size={20} box={20} color="#5f6368" w={1.500} d="M1 6.500V18h14v-3.500M5 13.500Q6 7.500 12.500 7V3.500l6.500 6-6.500 6V11.500Q8 11 5 13.500z" /></Slot>
          <Slot $w={40}><Icon size={20} box={20} color="#5f6368" w={1.600} d="M10 1.800l2.500 5.500 6 .6-4.500 4 1.300 5.900L10 14.700l-5.300 3.100L6 11.900l-4.500-4 6-.6z" /></Slot>
        </Omnibox>
        <Slot $w={54}><Icon size={18} box={18} color="#5f6368" w={2.500} d="M1.300 1.300h15.400v15.400H1.300z"><path d="M11 1h6v16h-6z" fill="#5f6368" stroke="none" /></Icon></Slot>
        <Slot $w={28}><Avatar $d={28}><SysText $size={14.5} $color="#fff" $ls={0}>K</SysText></Avatar></Slot>
        <Slot $w={51}><svg width="5" height="20" viewBox="0 0 5 20" fill="#5f6368"><circle cx="2.500" cy="3" r="2" /><circle cx="2.500" cy="10" r="2" /><circle cx="2.500" cy="17" r="2" /></svg></Slot>
      </AddressRow>

      <Header>
        <Slot $w={54}><Icon size={16} box={16} w={1.300} color="#f4f4f4" d="M0 2.500h16M0 6.500h16M0 10.500h16M0 14.500h16" /></Slot>
        <Slot $w={22} />
        <Text $color="#fff" $ls={0.12}>IBM </Text>
        <Text $color="#fff" $weight={600} $ls={0.14} $w={142}>Cognos Analytics</Text>
        <HeaderDivider />
        <DashboardIcon />
        <DocName>
          <Text $color="#fff" $ls={0.200}>* New dashboard</Text>
        </DocName>
        <Slot $w={64}><Chevron size={19} color="#fff" w={3.600} /></Slot>
        <HeaderActions>
          <Slot $w={63}><CountCircle><Text $color="#2a5fb8" $ls={-0.500}>324</Text></CountCircle></Slot>
          <Slot $w={60}><Icon size={20} color="#f4f4f4" w={2.600}><circle cx="13" cy="13" r="9.500" /><path d="M20 20l10 10" /></Icon></Slot>
          <Slot $w={60}><Icon size={23} box={24} color="#be95ff" w={1.700} d="M12 23l3-5h6q2 0 2-2V4q0-2-2-2H3Q1 2 1 4v12q0 2 2 2h8"><g fill="#d4bbff" stroke="none"><circle cx="7" cy="10" r="1.500" /><circle cx="12" cy="10" r="1.500" /><circle cx="17" cy="10" r="1.500" /></g></Icon></Slot>
          <Slot $w={60}><Icon size={24} color="#f4f4f4" w={2.200}><circle cx="16" cy="16" r="13.500" /><path d="M12 13v-.5Q12 9 16 9t4 3.500q0 2.500-4 3.500v3.500" /><circle cx="16" cy="23" r="1.500" fill="#f4f4f4" stroke="none" /></Icon></Slot>
          <Slot $w={60}>
            <Icon size={24} color="#f4f4f4" w={2.200} d="M4 24v-3l3-4v-5q1-8 9-8t9 8v5l3 4v3zM12 24q0 4.500 4 4.500t4-4.500" />
            <NotificationBadge><Text $size={15} $color="#fff" $ls={0}>1</Text></NotificationBadge>
          </Slot>
          <Slot $w={60}><UserCircle><Icon size={24} color="#fff" w={2.200}><circle cx="16" cy="9" r="6" /><path d="M7 30v-5q0-6 6-6h6q6 0 6 6v5" /></Icon></UserCircle></Slot>
        </HeaderActions>
      </Header>

      <Toolbar>
        <ToolGroup $w={129}>
          <Toggle><svg width="13" height="13" viewBox="0 0 13 13"><circle cx="6.500" cy="6.500" r="6.500" fill="#fff" /><path d="M3.500 7l2 2 4-4.500" fill="none" stroke="#24a148" strokeWidth="1.500" /></svg></Toggle>
          <Text $size={20} $weight={300} $ls={0.050}>Edit</Text>
        </ToolGroup>
        <ToolGroup $w={67}>
          <Slot $w={35}><Icon size={18} w={2.200} d="M4 4h18l6 6v18H4zM10 4v8h11V4M10 28v-9h12v9" /></Slot>
          <Slot $w={31}><Chevron size={15} /></Slot>
        </ToolGroup>
        <ToolGroup $w={50}>
          <Slot $w={47}><Icon size={20} w={2.100}><circle cx="7" cy="16" r="4" /><circle cx="24" cy="7" r="4" /><circle cx="24" cy="25" r="4" /><path d="M10.500 14l10-5M10.500 18l10 5" /></Icon></Slot>
        </ToolGroup>
        <ToolGroup $w={99}>
          <Slot $w={48}><Icon size={20} w={2.100} d="M10 6l-6 6 6 6M4 12h17q7 0 7 6.500T21 25h-9" /></Slot>
          <Slot $w={49}><Icon size={20} w={2.100} color="#a8a8a8" d="M22 6l6 6-6 6M28 12H11q-7 0-7 6.500T11 25h9" /></Slot>
        </ToolGroup>
        <Slot $w={48}><Icon size={20} w={2.100} d="M19 3h10v10M29 3L18.500 13.500M13.500 18.500L3 29M3 19v10h10" /></Slot>
        <Slot $w={49}><Icon size={20} w={2}><circle cx="9" cy="9" r="6" /><path d="M13.500 13.500l5 5" /><circle cx="22.500" cy="23" r="7" fill="#161616" stroke="none" /></Icon></Slot>
        <ToolLinks>
          <ToolLink><Text $color="#0f62fe" $ls={0.170}>Analytics</Text><Icon size={20} color="#0f62fe" w={2.200} d="M3 2v27h27M7 22l6-8 6 5 9-9M21 9.500h7.500V17" /></ToolLink>
          <ToolLink><Text $color="#0f62fe" $ls={0.100}>Filters</Text><Icon size={20} color="#0f62fe" w={2.200} d="M28 8V4H4v5l9 9v10h6v-8M20 18l8-8 2.500 2.500-8 8H20z" /></ToolLink>
          <ToolLink><Text $color="#0f62fe" $ls={0.150}>Fields</Text><Icon size={20} color="#0f62fe" w={2.200} d="M3 2.500h26v6H3zM3 23.500h26v6H3zM9 3v5M23 24v5"><path d="M2 11.500h28v9H2z" fill="#0f62fe" stroke="none" /></Icon></ToolLink>
          <ToolLink><Text $color="#0f62fe" $ls={0.170}>Properties</Text><Icon size={20} color="#0f62fe" w={2.200} d="M2 9h15M26 9h4M2 23h4M15 23h15"><circle cx="21.500" cy="9" r="4" /><circle cx="10.500" cy="23" r="4" /></Icon></ToolLink>
        </ToolLinks>
      </Toolbar>

      <Workspace>
        <Rail>
          <RailItem $active $h={60}><Icon size={23} w={2.400} d="M2 3h7v6H2zM23 14.500h7v6h-7zM23 24.500h7v6h-7zM9 6h8v21.500h6M17 17.500h6" /></RailItem>
          <RailItem $h={61}><PushPin /></RailItem>
          <RailItem $h={57}><Icon size={24} w={2.200} d="M3 2v27h27M8.500 29V16h6v13M20 29V7h6v22" /></RailItem>
          <RailItem $h={57}><Icon size={24} w={2} d="M21 3.500L28.500 11 11 28.500H3.500V21zM17 7.500l7.500 7.500M12 13L3.500 8 9 2.500l6 6M6 11l3-3M19 24l4 5.500 6.500-6.500-6-5.500M20 24l3-3" /></RailItem>
          <RailItem $h={57}><Icon size={24} w={2.200} d="M7 18L12.500 3l5 11M9 14h5"><path d="M2 26h11" strokeWidth="4" /><circle cx="21.500" cy="21.500" r="8.500" /><path d="M19 17.500l6.500 4-6.500 4z" /></Icon></RailItem>
        </Rail>

        <SourcePanel>
          <Crumbs>
            <Text $color="#0f62fe" $ls={0.200}>Selected sources</Text>
            <Text $color="#525252">/</Text>
          </Crumbs>
          <SourceTitle>
            <TitleText $weight={600} $ls={0.290} $w={295}>India_literacy_data_2021_Stat...</TitleText>
            <Slot $w={51}><Plus /></Slot>
            <Slot $w={28}><svg width="4" height="14" viewBox="0 0 4 14" fill="#161616"><circle cx="2" cy="2" r="1.500" /><circle cx="2" cy="7" r="1.500" /><circle cx="2" cy="12" r="1.500" /></svg></Slot>
          </SourceTitle>
          <SearchField>
            <Icon size={20} color="#525252" w={1.800}><circle cx="13" cy="13" r="10" /><path d="M20 20l10 10" /></Icon>
            <Text $color="#6f6f6f" $ls={0.300}>Search</Text>
          </SearchField>
          <Tree>
            <TreeRow>
              <span />
              <Icon size={20} color="#393939" w={1.900} d="M3 6h8l4 4h14v18H3z" />
              <Text $size={20} $weight={300} $ls={0.160}>Navigation paths</Text>
              <Plus />
            </TreeRow>
            <TreeRow>
              <CaretDown />
              <Icon size={18} color="#393939" w={2} d="M2 2h28v28H2zM2 8h28M2 15.500h28M2 22.500h28M11.500 8v22M20.500 8v22" />
              <Text $size={20} $weight={300} $ls={0.150}>India_literac...atewise.xlsx</Text>
            </TreeRow>
            {treeItems.map((it) => (
              <TreeRow $deep key={it.label}>
                {it.kind === "measure" ? <span /> : <CaretRight />}
                {it.kind === "abc" && <Abc>abc</Abc>}
                {it.kind === "measure" && <RulerIcon />}
                {it.kind === "pin" && (
                  <Icon size={18} w={1.900} color="#393939" d="M14 31L5 19Q3 16 3 12.500 4 2.500 14 2t11 10.500q0 3.500-2 6.500z"><circle cx="14" cy="13" r="4.500" /></Icon>
                )}
                <Text $size={20} $weight={300} $ls={it.ls}>{it.label}</Text>
              </TreeRow>
            ))}
          </Tree>
        </SourcePanel>

        <Splitter><SplitGrip /></Splitter>

        <Board>
          <PageTabs>
            {[1, 2, 3, 4, 5, 6, 7, 8].map((n) => (
              <PageTab key={n} $active={n === 6}><Text $weight={600} $ls={0.030}>{`Tab ${n}`}</Text></PageTab>
            ))}
            <Slot $w={49} $h={47}><Icon size={11} box={11} w={1.300} d="M5.500 0v11M0 5.500h11" /></Slot>
          </PageTabs>
          <CanvasRow>
            <Canvas>
              <Grid>
                <Widget>
                  <WidgetHead>
                    <WidgetTitle $size={20} $weight={300} $ls={0.090}>Women (age 15-49) who are literate4 (%)</WidgetTitle>
                    <Grow />
                    <Icon size={20} w={2} d="M11 24h10M13 28h6M11.500 20.500Q7 17 6.500 12 7 3 16 2.500T25.500 12q-.5 5-5 8.500" />
                    <InsightWheel />
                  </WidgetHead>
                  <Controls>
                    <Legend>
                      <Text $size={15} $ls={0.010}>Women (age 15-4...</Text>
                      <Ramp>{ramp.map((c) => <Swatch key={c} $c={c} />)}</Ramp>
                      <RampEnds>
                        <Text $size={11} $ls={-0.450} $color="#6f6f6f">73.3</Text>
                        <Text $size={11} $ls={-0.450} $color="#6f6f6f">92.5</Text>
                      </RampEnds>
                    </Legend>
                    <NodePicker>
                      <Text $size={15} $ls={-0.050}>Nodes</Text>
                      <Select><Text $ls={-0.500}>All</Text><Chevron size={16} /></Select>
                    </NodePicker>
                  </Controls>
                  <Chart />
                </Widget>
              </Grid>
            </Canvas>
            <Scrollbar><CaretUp /><Thumb /><CaretDown $c="#505050" /></Scrollbar>
          </CanvasRow>
          <BottomBar><SplitGrip $flat /></BottomBar>
        </Board>
      </Workspace>

      <Taskbar>
        <Weather>
          <WeatherIcon />
          <Stack>
            <SysText $size={14.5} $ls={-0.730}>31°C</SysText>
            <SysText $size={14.5} $ls={-0.200} $color="#4a5b5a">Partly sunny</SysText>
          </Stack>
        </Weather>
        <WindowsLogo />
        <SearchPill>
          <Icon size={20} w={3.200} color="#1f1f1f"><circle cx="14" cy="14" r="10.500" /><path d="M21.500 21.500l8 8" /></Icon>
          <Slot $w={12} />
          <SysText $size={17} $ls={-0.310} $color="#4d5a5a">Search</SysText>
          <Grow />
          <SchoolArt />
        </SearchPill>
        <TaskApps />
        <Tray>
          <Slot $w={40}><Icon size={14} box={14} w={1.700} d="M1 10.500l6-6.500 6 6.500" /></Slot>
          <Slot $w={27} />
          <Stack $align="center" $w={1}>
            <SysText $size={14.5} $ls={-0.180}>ENG</SysText>
            <SysText $size={14.5} $ls={0}>IN</SysText>
          </Stack>
          <Slot $w={32} />
          <Slot $w={30}><Icon size={21} box={22} w={1.700} d="M1 8.500q10-9 20 0M4 12q7-6.500 14 0M7 15.200q4-3.700 8 0"><circle cx="11" cy="18" r="1.800" fill="#161616" stroke="none" /></Icon></Slot>
          <Slot $w={30}><Icon size={20} box={20} w={1.400} d="M1 7h3l5-4.500v15L4 13H1zM13 7l5.500 5.500M18.500 7L13 12.500" /></Slot>
          <Slot $w={31}><Icon size={20} box={20} w={1.500} d="M7 4.500h8q2 0 2 2v7q0 2-2 2H3q-2 0-2-2V10M18.500 8.500v3"><path d="M8 6.500h7.500v7H3l3-4z" fill="#161616" stroke="none" /><path d="M4 0L1 6h2.500L2.500 10 7 4H4.500L6 0z" fill="#161616" stroke="none" /></Icon></Slot>
          <Stack $align="flex-end" $w={93}>
            <SysText $size={14.5} $ls={-0.060}>12:35 PM</SysText>
            <SysText $size={14.5} $ls={0.230}>29-07-2023</SysText>
          </Stack>
          <Slot $w={42}>
            <svg width="20" height="20" viewBox="0 0 20 20" fill="none" stroke="#161616" strokeWidth="1.400"><path d="M9 2Q4 2.500 3.800 8v4L1.500 15.500h15L14.500 13M6.500 16q1 3 4.500 1.500M7.500 6.500h4l-4 5h4M13 1.500h4L13 6.500h4" /></svg>
          </Slot>
          <Slot $w={12} />
        </Tray>
      </Taskbar>

      <Tooltip>
        <TipRow $h={32} $line="#393939" $pb={2}>
          <Text $weight={300} $ls={0.125} $color="#262626">States/UTs = Goa, Himachal Pradesh, Kerala, Lakshadweep, Manipur, Meghalaya, Mizoram, Puducherry, Sikkim</Text>
        </TipRow>
        {tipRows.map((r) => (
          <TipRow key={r.label} $h={r.h} $line="#e0e0e0">
            <Text $weight={300} $ls={r.ls} $color="#262626">{r.label}</Text>
            <Text $weight={500} $ls={0.050} $color="#393939">{r.value}</Text>
          </TipRow>
        ))}
      </Tooltip>
    </Page>
  );
}
